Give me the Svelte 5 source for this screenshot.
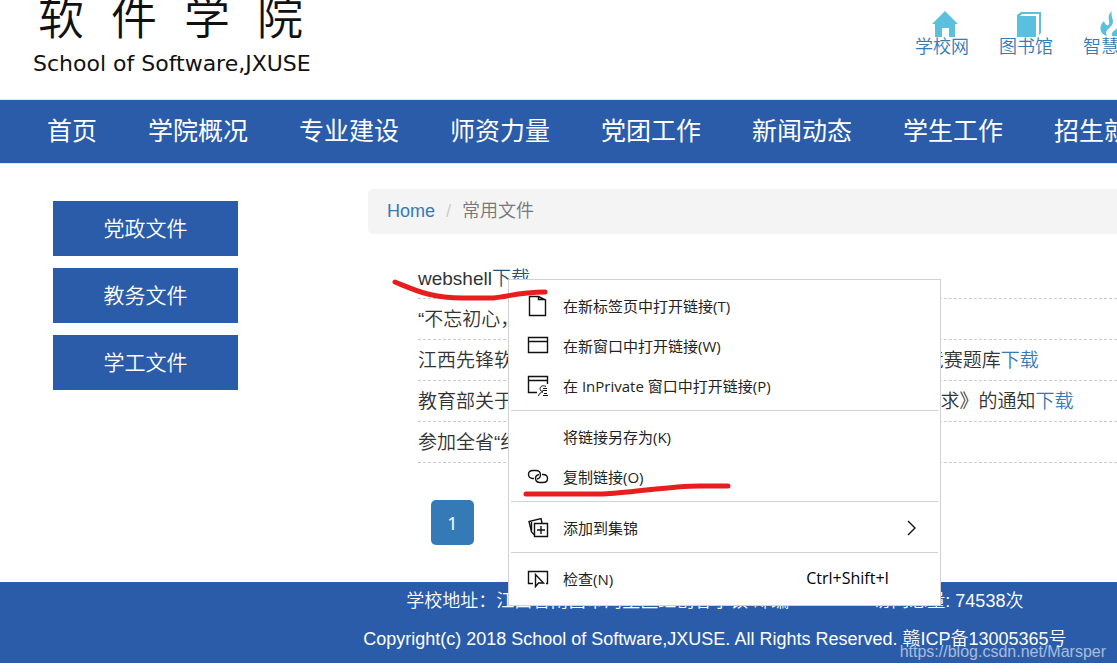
<script>
    const navItems = ['首页', '学院概况', '专业建设', '师资力量', '党团工作', '新闻动态', '学生工作', '招生就业'];
    const sideItems = ['党政文件', '教务文件', '学工文件'];

    const files = [
        { title: 'webshell', active: true },
        { title: '“不忘初心，牢记使命”主题教育学习资料' },
        { title: '江西先锋软件职业技术学院“不忘初心，牢记使命”主题党日暨竞赛题库' },
        { title: '教育部关于印发《2018 年普通高等学校教师党支部建设工作要求》的通知' },
        { title: '参加全省“纪念五四运动”活动通知' }
    ];

    const menuGroups = [
        [
            { icon: 'tab', label: '在新标签页中打开链接(T)' },
            { icon: 'window', label: '在新窗口中打开链接(W)' },
            { icon: 'private', label: '在 InPrivate 窗口中打开链接(P)' }
        ],
        [
            { icon: '', label: '将链接另存为(K)' },
            { icon: 'link', label: '复制链接(O)' }
        ],
        [{ icon: 'collect', label: '添加到集锦', more: true }],
        [{ icon: 'inspect', label: '检查(N)', keys: 'Ctrl+Shift+I' }]
    ];
</script>

<div class="page">
    <header>
        <div class="logo">
            <div class="logo-cn">
                <span>软</span><span>件</span><span>学</span><span>院</span>
            </div>
            <div class="logo-en">School of Software,JXUSE</div>
        </div>
        <div class="quick">
            <a href="#school">
                <svg width="26" height="26" viewBox="0 0 26 26">
                    <path d="M13 0 L26 13 H23 V26 H17 V17 H10 V26 H3 V13 H0 Z" />
                </svg>
                学校网
            </a>
            <a href="#library">
                <svg width="26" height="26" viewBox="0 0 26 26">
                    <path d="M5 1 H25 V22 L23 24 V3 H6 L4 5 H20 V26 H1 V4 Z" />
                </svg>
                图书馆
            </a>
            <a href="#campus">
                <svg width="44" height="26" viewBox="0 0 44 26">
                    <path d="M12 0 C6 5 10 9 9 13 C8 16 5 14 4 10 C-2 16 0 23 7 25 C4 20 9 18 12 14 C15 9 10 6 12 0 Z M19 3 C16 9 21 12 18 16 C15 20 11 20 12 25 C24 27 31 18 24 10 C24 14 22 14 22 11 C22 7 18 7 19 3 Z" />
                </svg>
                智慧校园
            </a>
        </div>
    </header>

    <nav>
        {#each navItems as item}
            <a href="#nav">{item}</a>
        {/each}
    </nav>

    <main>
        <aside>
            {#each sideItems as item}
                <a href="#side">{item}</a>
            {/each}
        </aside>
        <section>
            <div class="breadcrumb">
                <a href="#home">Home</a>
                <span class="slash">/</span>
                <span>常用文件</span>
            </div>
            <ul>
                {#each files as file}
                    <li>{file.title}<a href="#file" class:active={file.active}>下载</a></li>
                {/each}
            </ul>
            <button class="page-number">1</button>
        </section>
    </main>

    <footer>
        <p>
            <span>学校地址：江西省南昌市湾里区红创客小镇 邮编</span>
            <span>访问总量: 74538次</span>
        </p>
        <p>Copyright(c) 2018 School of Software,JXUSE. All Rights Reserved. 赣ICP备13005365号</p>
        <div class="watermark">https://blog.csdn.net/Marsper</div>
    </footer>

    <div class="menu">
        {#each menuGroups as group}
            <div class="group">
                {#each group as item}
                    <button class="item">
                        <svg class="icon" width="22" height="22" viewBox="0 0 22 22">
                            {#if item.icon === 'tab'}
                                <path d="M2.5 1.5 H11.5 L18.5 5 V20.5 H2.5 Z M11.5 1.5 V4.5 H18.5" />
                            {:else if item.icon === 'window'}
                                <path d="M1.5 2.5 H20.5 V17.5 H1.5 Z M1.5 6.5 H20.5" />
                            {:else if item.icon === 'private'}
                                <path d="M10 17.5 H1.5 V1.5 H20.5 V9 M1.5 5.5 H20.5" />
                                <path class="thin" d="M19 11.5 C15 9.5 12 12 13.5 15.5 L16 17 M16 13.5 H20 M15.5 15.5 H20 M11.5 21 C12 18.5 14 17 16 17 M17 18.5 H20 M16 20.5 H21" />
                            {:else if item.icon === 'link'}
                                <path d="M7 12.5 H6 C0 12.5 0 4.5 6 4.5 H9 C14.5 4.5 15 12 10 13" />
                                <path d="M15 8.5 H16 C22 8.5 22 16.5 16 16.5 H13 C7.5 16.5 7 9.5 12 8.5" />
                            {:else if item.icon === 'collect'}
                                <path d="M7.5 6.5 H20.5 V19.5 H7.5 Z M14 9 V17 M10 13 H18" />
                                <path d="M15 6 L14 1.5 L2 4.5 L4.5 15 L7.5 18 M4.5 5 V15" />
                            {:else if item.icon === 'inspect'}
                                <path d="M6 15.5 H1.5 V3.5 H20.5 V15.5 H19" />
                                <path d="M8.5 6.5 V18.5 L11.5 15 H16.5 Z" />
                            {/if}
                        </svg>
                        <span class="label">{item.label}</span>
                        {#if item.keys}
                            <span class="keys">{item.keys}</span>
                        {/if}
                        {#if item.more}
                            <svg class="icon" width="12" height="16" viewBox="0 0 12 16">
                                <path d="M2 1 L9 8 L2 15" />
                            </svg>
                        {/if}
                    </button>
                {/each}
            </div>
        {/each}
    </div>

    <!-- red pen marks -->
    <svg class="marks" width="340" height="220" viewBox="0 0 340 220">
        <path d="M5 7 C25 15 40 23 73 23 H103 C118 22 128 17 155 17" />
        <path d="M136 219 H213 C240 218 280 211 310 211 H338" />
    </svg>
</div>

<style>
    :global(body) {
        margin: 0;
        background: #fff;
    }

    .page {
        position: relative;
        overflow: hidden;
        font-family: "Liberation Sans", "Noto Sans CJK SC", sans-serif;
        font-weight: 350;
        font-size: 18px;
        color: #333;
    }

    a {
        color: #337ab7;
        text-decoration: none;
    }

    header {
        display: flex;
        height: 99px;
        border-bottom: 1px solid #e7e7e7;
        overflow: hidden;
    }

    .logo {
        flex: 1;
        padding-left: 33px;
        color: #111;
    }

    .logo-cn {
        display: flex;
        gap: 27px;
        padding-left: 5px;
        font-size: 46px;
        line-height: 36px;
    }

    .logo-en {
        margin-top: 16px;
        font-family: "DejaVu Sans", sans-serif;
        font-size: 22px;
        font-weight: 400;
        line-height: 24px;
    }

    .quick {
        display: flex;
        gap: 30px;
        width: 202px;
        padding-top: 11px;
    }

    .quick a {
        display: flex;
        flex-direction: column;
        align-items: center;
        flex: none;
        line-height: 20px;
    }

    .quick svg {
        margin-left: 6px;
        fill: #5bc0de;
    }

    nav {
        display: flex;
        gap: 1px;
        padding-left: 22px;
        background: #2a5caa;
        border-bottom: 1px solid #e7e7e7;
        font-weight: 400;
    }

    nav a {
        flex: none;
        padding: 0 25px;
        color: #fff;
        font-size: 25px;
        line-height: 63px;
    }

    main {
        display: grid;
        grid-template-columns: 185px 1fr;
        gap: 130px;
        padding: 25px 0 37px 53px;
    }

    aside {
        display: flex;
        flex-direction: column;
        gap: 12px;
        padding-top: 12px;
    }

    aside a {
        background: #2a5caa;
        color: #fff;
        font-size: 21px;
        line-height: 55px;
        text-align: center;
    }

    .breadcrumb {
        display: flex;
        padding-left: 19px;
        background: #f4f4f4;
        border-radius: 5px 0 0 5px;
        color: #777;
        line-height: 45px;
    }

    .slash {
        padding: 0 11px;
        color: #ccc;
    }

    ul {
        margin: 24px 0 0;
        padding: 0 0 0 50px;
        list-style: none;
    }

    li {
        padding-top: 2px;
        border-bottom: 1px dashed #ccc;
        font-size: 19px;
        line-height: 38px;
        white-space: nowrap;
    }

    li a.active {
        color: #23527c;
    }

    .page-number {
        display: block;
        width: 43px;
        height: 45px;
        margin: 37px 0 0 63px;
        padding: 0;
        border: none;
        border-radius: 5px;
        background: #337ab7;
        color: #fff;
        font-family: "Noto Sans", sans-serif;
        font-size: 18px;
    }

    footer {
        position: relative;
        padding: 0 0 5px 28%;
        background: #2a5caa;
        color: #fff;
        text-align: center;
        white-space: nowrap;
    }

    footer p {
        display: flex;
        justify-content: center;
        gap: 84px;
        margin: 0;
        line-height: 38px;
    }

    .watermark {
        position: absolute;
        right: 11px;
        bottom: 0;
        color: rgba(255, 255, 255, 0.6);
        font-size: 16px;
        line-height: 22px;
    }

    .menu {
        position: absolute;
        top: 279px;
        left: 508px;
        width: 431px;
        padding: 6px 0;
        border: 1px solid #d2d2d2;
        background: #fff;
    }

    .group + .group {
        margin: 4px 2px 0;
        padding-top: 6px;
        border-top: 1px solid #d2d2d2;
    }

    .group:first-child {
        margin: 0 2px;
    }

    .item {
        display: flex;
        align-items: center;
        width: 100%;
        height: 40px;
        padding: 0 20px 0 16px;
        border: none;
        background: none;
        color: #222;
        font-family: "Open Sans", "Noto Sans CJK SC", sans-serif;
        font-size: 15px;
        font-weight: 400;
        text-align: left;
    }

    .label {
        flex: 1;
        padding: 0 0 2px 14px;
    }

    .keys {
        padding: 0 29px 2px 0;
        color: #000;
        font-size: 16px;
    }

    .icon {
        fill: none;
        stroke: #111;
        stroke-width: 1.4;
    }

    .icon .thin {
        stroke-width: 1;
    }

    .marks {
        position: absolute;
        top: 275px;
        left: 390px;
        overflow: visible;
        fill: none;
        stroke: #e81e1e;
        stroke-width: 5;
        stroke-linecap: round;
        pointer-events: none;
    }
</style>
